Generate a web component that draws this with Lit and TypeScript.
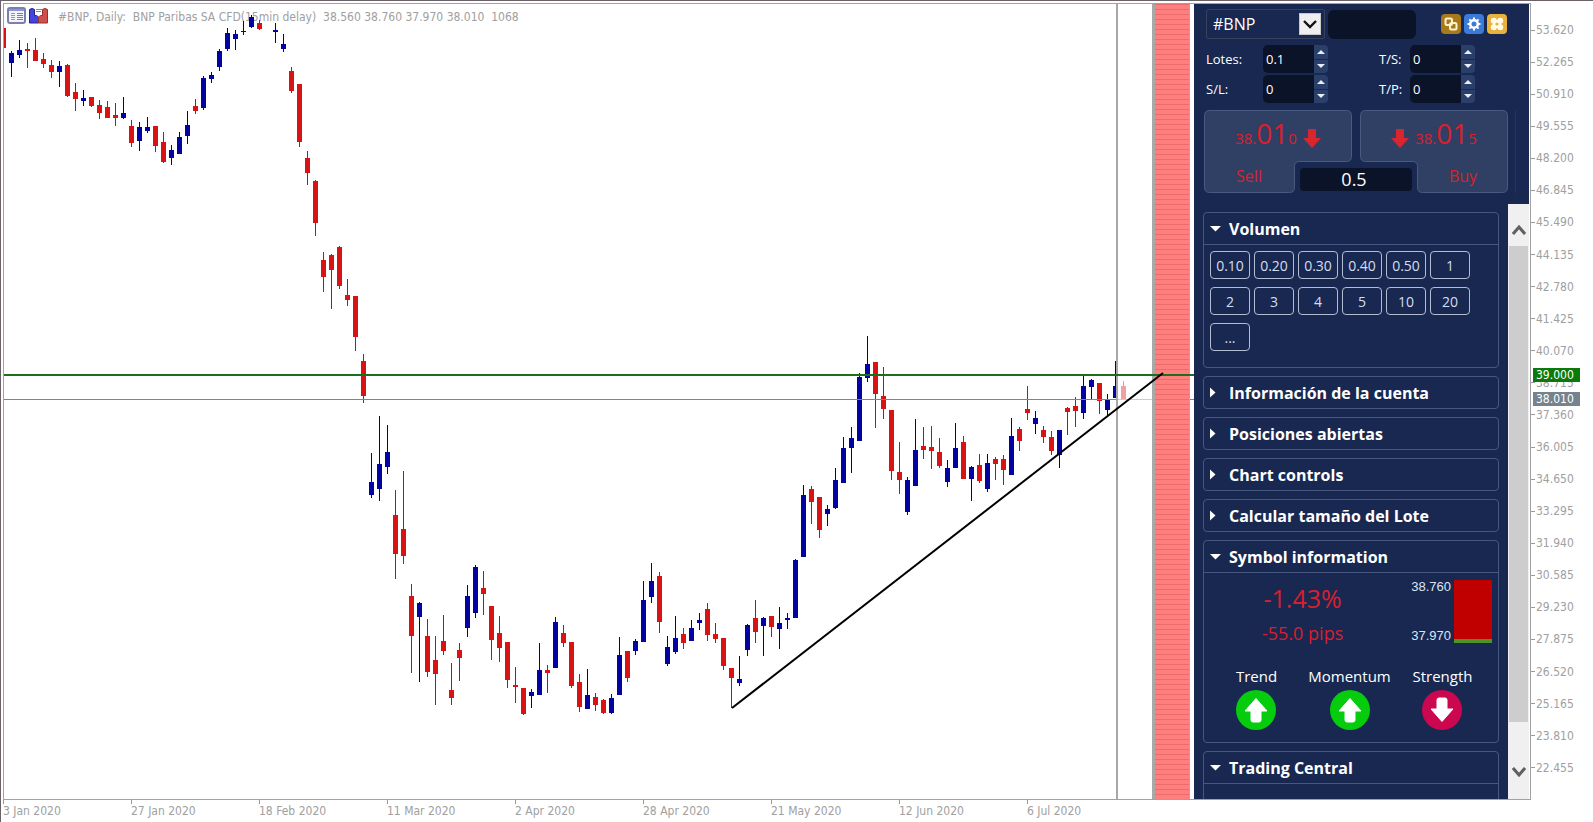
import { LitElement, html, svg, css } from "lit";
import { customElement, property, state } from "lit/decorators.js";

type Candle = [number, number, number, number, number, "u" | "d"];

// slot, high, body top, body bottom, low, direction
const CANDLES: Candle[] = [
  [-1, 28, 28, 48, 48, "d"],
  [0, 51, 53, 63, 77, "u"], [1, 40, 50, 55, 58, "u"], [2, 43, 49, 51, 68, "d"], [3, 38, 50, 61, 61, "d"],
  [4, 53, 59, 64, 68, "d"], [5, 60, 65, 72, 78, "d"], [6, 61, 66, 72, 87, "u"], [7, 64, 65, 96, 97, "d"],
  [8, 83, 92, 99, 111, "d"], [9, 90, 98, 101, 106, "u"], [10, 97, 97, 106, 107, "d"], [11, 100, 105, 113, 119, "d"],
  [12, 101, 107, 118, 118, "d"], [13, 103, 115, 118, 126, "d"], [14, 97, 113, 118, 119, "u"], [15, 120, 126, 143, 147, "d"],
  [16, 122, 127, 141, 151, "u"], [17, 117, 127, 131, 133, "u"], [18, 126, 126, 146, 152, "d"], [19, 132, 142, 162, 163, "d"],
  [20, 145, 150, 158, 165, "u"], [21, 132, 137, 154, 154, "u"], [22, 111, 125, 136, 144, "u"], [23, 99, 106, 111, 114, "d"],
  [24, 76, 78, 108, 110, "u"], [25, 72, 75, 79, 83, "u"], [26, 49, 51, 67, 71, "u"], [27, 28, 33, 49, 51, "u"],
  [28, 30, 34, 39, 50, "u"], [29, 21, 31, 32, 35, "u"], [30, 15, 17, 27, 28, "u"], [31, 20, 23, 29, 30, "d"],
  [33, 23, 30, 32, 43, "u"], [34, 34, 44, 49, 52, "u"], [35, 67, 71, 91, 93, "d"], [36, 84, 84, 142, 147, "d"],
  [37, 151, 158, 173, 185, "d"], [38, 180, 181, 223, 236, "d"], [39, 252, 260, 277, 292, "d"], [40, 254, 255, 270, 309, "d"],
  [41, 246, 247, 286, 289, "d"], [42, 279, 295, 300, 306, "d"], [43, 296, 296, 337, 351, "d"], [44, 354, 361, 396, 403, "d"],
  [45, 453, 482, 495, 498, "u"], [46, 416, 464, 489, 501, "u"], [47, 425, 452, 467, 474, "u"], [48, 490, 515, 554, 579, "d"],
  [49, 471, 529, 556, 564, "d"], [50, 584, 596, 636, 673, "d"], [51, 602, 603, 617, 682, "u"], [52, 619, 636, 672, 677, "d"],
  [53, 636, 660, 674, 705, "d"], [54, 615, 641, 651, 655, "d"], [55, 663, 690, 698, 705, "d"], [56, 643, 650, 658, 681, "d"],
  [57, 585, 596, 628, 637, "u"], [58, 565, 567, 613, 618, "u"], [59, 571, 588, 594, 615, "d"], [60, 606, 606, 640, 660, "d"],
  [61, 616, 633, 648, 662, "d"], [62, 642, 642, 680, 688, "d"], [63, 667, 685, 687, 703, "d"], [64, 688, 688, 714, 715, "d"],
  [65, 689, 692, 696, 708, "u"], [66, 643, 670, 695, 695, "u"], [67, 665, 670, 673, 693, "d"], [68, 617, 622, 668, 668, "u"],
  [69, 625, 633, 643, 647, "d"], [70, 642, 642, 686, 688, "d"], [71, 674, 682, 707, 712, "d"], [72, 669, 695, 709, 709, "u"],
  [73, 693, 697, 705, 711, "d"], [74, 699, 700, 713, 714, "d"], [75, 694, 698, 713, 714, "u"], [76, 637, 655, 695, 695, "u"],
  [77, 651, 651, 678, 682, "d"], [78, 639, 641, 651, 655, "u"], [79, 581, 600, 642, 642, "u"], [80, 563, 581, 597, 603, "u"],
  [81, 572, 576, 622, 633, "d"], [82, 636, 647, 664, 666, "u"], [83, 616, 638, 652, 654, "u"], [84, 628, 634, 643, 649, "d"],
  [85, 620, 628, 641, 641, "u"], [86, 613, 620, 623, 630, "u"], [87, 603, 609, 635, 641, "d"], [88, 623, 634, 639, 643, "d"],
  [89, 638, 638, 666, 670, "d"], [90, 668, 668, 678, 708, "d"], [91, 656, 679, 683, 686, "u"], [92, 624, 625, 650, 656, "u"],
  [93, 600, 618, 632, 643, "d"], [94, 617, 618, 626, 656, "u"], [95, 616, 616, 627, 637, "d"], [96, 607, 623, 629, 649, "u"],
  [97, 613, 618, 620, 629, "u"], [98, 559, 560, 618, 618, "u"], [99, 485, 495, 557, 557, "u"], [100, 486, 489, 502, 524, "d"],
  [101, 497, 497, 530, 538, "d"], [102, 505, 509, 514, 526, "u"], [103, 468, 480, 508, 509, "u"], [104, 437, 448, 483, 483, "u"],
  [105, 427, 438, 448, 473, "u"], [106, 373, 377, 441, 441, "u"], [107, 336, 364, 378, 382, "u"], [108, 362, 362, 394, 428, "d"],
  [109, 367, 396, 409, 419, "d"], [110, 410, 410, 471, 480, "d"], [111, 442, 472, 480, 494, "d"], [112, 477, 480, 512, 515, "u"],
  [113, 419, 450, 486, 486, "u"], [114, 427, 446, 450, 459, "d"], [115, 426, 447, 451, 469, "d"], [116, 438, 452, 466, 468, "d"],
  [117, 460, 468, 482, 487, "u"], [118, 423, 448, 468, 468, "u"], [119, 436, 442, 479, 479, "d"], [120, 466, 467, 479, 501, "u"],
  [121, 454, 465, 481, 483, "d"], [122, 454, 463, 489, 492, "u"], [123, 457, 459, 464, 480, "d"], [124, 455, 459, 470, 485, "d"],
  [125, 418, 436, 475, 475, "u"], [126, 427, 429, 441, 451, "d"], [127, 386, 409, 413, 420, "d"], [128, 411, 418, 424, 434, "u"],
  [129, 426, 430, 437, 443, "d"], [130, 431, 437, 451, 455, "d"], [131, 430, 430, 455, 468, "u"], [132, 407, 408, 412, 435, "d"],
  [133, 397, 406, 411, 427, "d"], [134, 376, 386, 413, 419, "u"], [135, 379, 380, 387, 400, "u"], [136, 383, 383, 401, 414, "d"],
  [137, 394, 399, 410, 416, "u"], [138, 361, 386, 398, 398, "u"], [139, 381, 386, 399, 400, "d"],
];

const PRICES = [
  "53.620", "52.265", "50.910", "49.555", "48.200", "46.845", "45.490", "44.135", "42.780", "41.425", "40.070", "38.715",
  "37.360", "36.005", "34.650", "33.295", "31.940", "30.585", "29.230", "27.875", "26.520", "25.165", "23.810", "22.455",
];

const DATES = [
  "3 Jan 2020", "27 Jan 2020", "18 Feb 2020", "11 Mar 2020", "2 Apr 2020", "28 Apr 2020", "21 May 2020", "12 Jun 2020", "6 Jul 2020",
];

@customElement("price-chart")
class PriceChart extends LitElement {
  static styles = css`
    :host { display: grid; min-width: 0; min-height: 0; overflow: hidden; font: 12px/16px "DejaVu Sans Condensed", "DejaVu Sans", sans-serif; }
    .legend, .plot { grid-area: 1 / 1; }
    .legend { display: flex; align-items: flex-start; gap: 3px; padding: 3px 0 0 3px; color: #a0a0a0; white-space: pre; }
    .legend svg { width: 19px; height: 17px; flex: none; }
    .caption { padding: 2px 0 0 7px; }
    .plot { display: block; width: 100%; height: 100%; z-index: 1; }
    .u { fill: #0303a2; }
    .d { fill: #d81313; }
    .wu { fill: #05055c; }
    .wd { fill: #a31c1c; }
    .level { fill: #1b701b; }
    .price { fill: #7d8686; }
    .shade { fill: #fff; fill-opacity: 0.6; }
    .edge { fill: #a8a8a8; }
    .base { fill: #ff7f7f; }
    .stripe { fill: #ea6d6d; }
    .trend { stroke: #000; stroke-width: 2; }
  `;

  render() {
    return html`
      <div class="legend">
        <svg viewBox="0 0 19 17" aria-hidden="true">
          <rect x="1" y="1" width="17" height="15" rx="2" fill="#f4f4fb" stroke="#7c7fae" stroke-width="2" />
          <rect x="2" y="2" width="15" height="2" fill="#8a94e0" />
          <path d="M4 6.5h4M4 8.500h4M4 10.500h4M4 12.500h4" stroke="#e07a6a" />
          <path d="M10 6.500h6M10 8.500h6M10 10.500h6M10 12.500h6" stroke="#6a7ad8" />
        </svg>
        <svg viewBox="0 0 19 17" aria-hidden="true">
          <path d="M7 2.500h6M7 4.500h5" stroke="#888" />
          <path d="M.5 2.500q2.500-2 5 0v6h2l2 1.500v6H.5z" fill="#4444dc" stroke="#22228c" />
          <path d="M18.500 2.500q-2.500-2-5 0v6h-2l-2 1.500v6h9z" fill="#cf4f4f" stroke="#963030" />
        </svg>
        <span class="caption">#BNP, Daily:  BNP Paribas SA CFD(15min delay)  38.560 38.760 37.970 38.010  1068</span>
      </div>
      <svg class="plot" viewBox="4 4 1190 795" preserveAspectRatio="none" role="img" aria-label="#BNP, Daily">
        <defs>
          <pattern id="bars" y="4" width="40" height="5" patternUnits="userSpaceOnUse">
            <rect class="base" width="40" height="5" />
            <rect class="stripe" width="40" height="1" />
          </pattern>
        </defs>
        <g shape-rendering="crispEdges">
          ${CANDLES.map(([k, hi, top, bottom, lo, dir]) => {
            const x = 11 + k * 8;
            return svg`
              <rect class=${"w" + dir} x=${x} y=${hi} width="1" height=${lo - hi}></rect>
              <rect class=${dir} x=${x - 2} y=${top} width="5" height=${bottom - top}></rect>`;
          })}
          <rect class="price" x="4" y="399" width="1190" height="1" />
          <rect class="shade" x="1118" y="4" width="34" height="795" />
          <rect class="edge" x="1116" y="4" width="2" height="795" />
          <rect class="edge" x="1152" y="4" width="38" height="795" />
          <rect x="1155" y="4" width="34" height="795" fill="url(#bars)" />
          <rect class="level" x="4" y="374" width="1190" height="2" />
        </g>
        <line class="trend" x1="732" y1="708" x2="1163" y2="373" />
      </svg>
    `;
  }
}

@customElement("number-field")
class NumberField extends LitElement {
  @property() label = "";
  @property() value = "0";
  static styles = css`
    :host { display: contents; }
    label { font-size: 13px; line-height: 28px; color: #fff; }
    .field { display: flex; height: 28px; }
    input { width: 51px; min-width: 0; box-sizing: border-box; border: 0; border-radius: 5px 0 0 5px; padding: 0 3px; background: #0b1328; color: #fff; font: 13px "Open Sans", sans-serif; appearance: textfield; -moz-appearance: textfield; }
    input::-webkit-inner-spin-button, input::-webkit-outer-spin-button { appearance: none; margin: 0; }
    .steps { display: grid; grid-template-rows: 1fr 1fr; gap: 1px; width: 14px; }
    button { border: 0; padding: 0; background: #2b3f6b; border-radius: 0 4px 0 0; display: grid; place-items: center; }
    button + button { border-radius: 0 0 4px 0; }
    svg { width: 8px; height: 4px; }
  `;
  private step(sign: number) {
    this.value = String(Math.round((Number(this.value) + sign * 0.1) * 100) / 100);
  }
  render() {
    return html`
      <label for="n">${this.label}</label>
      <div class="field">
        <input id="n" type="number" step="any" .value=${this.value} />
        <div class="steps">
          <button aria-label="+" @click=${() => this.step(1)}><svg viewBox="0 0 8 4"><path d="M0 4L4 0l4 4z" fill="#e8edf8" /></svg></button>
          <button aria-label="-" @click=${() => this.step(-1)}><svg viewBox="0 0 8 4"><path d="M0 0l4 4 4-4z" fill="#e8edf8" /></svg></button>
        </div>
      </div>
    `;
  }
}

@customElement("fold-section")
class FoldSection extends LitElement {
  @property() heading = "";
  @property({ type: Boolean, reflect: true }) open = false;
  static styles = css`
    :host { display: block; flex: none; box-sizing: border-box; border: 1px solid #465880; border-radius: 4px; }
    h2 { margin: 0; }
    .head { display: flex; align-items: center; gap: 8px; width: 100%; height: 31px; border: 0; padding: 0 6px; background: none; color: #fff; font: 700 16px "Open Sans", sans-serif; text-align: left; }
    .head svg { width: 11px; height: 11px; flex: none; }
    .body { border-top: 1px solid #465880; }
  `;
  render() {
    return html`
      <h2>
        <button class="head" aria-expanded=${this.open ? "true" : "false"} @click=${() => (this.open = !this.open)}>
          <svg viewBox="0 0 11 11"><path d=${this.open ? "M0 3h11L5.500 8.500z" : "M0 0.500v10l5.500-5z"} fill="#fff" /></svg>
          <span>${this.heading}</span>
        </button>
      </h2>
      ${this.open ? html`<div class="body"><slot></slot></div>` : ""}
    `;
  }
}

@customElement("trade-panel")
class TradePanel extends LitElement {
  @state() private volume = "0.5";
  static styles = css`
    :host { display: flex; flex-direction: column; min-height: 0; overflow: hidden; background: #182851; color: #fff; font: 13px "Open Sans", sans-serif; }
    button { font-family: inherit; cursor: pointer; }
    .ticket { flex: none; display: flex; flex-direction: column; padding: 5px 0 11px 12px; }
    .top { display: flex; align-items: center; gap: 3px; height: 30px; margin-bottom: 6px; }
    .pick { position: relative; width: 119px; height: 30px; }
    .pick select { width: 100%; height: 100%; box-sizing: border-box; appearance: none; border: 1px solid #36415c; background: transparent; color: #fff; font: 16px "Open Sans", sans-serif; padding: 0 6px; border-radius: 2px; }
    .pick svg { position: absolute; right: 4px; top: 4px; width: 22px; height: 22px; pointer-events: none; }
    .search { width: 88px; height: 29px; box-sizing: border-box; border: 0; border-radius: 6px; background: #0b1328; color: #fff; margin-right: 22px; }
    .tool { width: 20px; height: 20px; border: 0; padding: 0; border-radius: 4px; display: grid; place-items: center; }
    .tool svg { width: 16px; height: 16px; }
    .link { background: #a87a1a; }
    .gear { background: #3a7ad8; }
    .grid { background: #e8b23c; }
    .fields { display: grid; grid-template-columns: 57px 65px 51px 31px 65px; row-gap: 2px; margin-bottom: 7px; }
    .gap { grid-column: 3; }
    .deal { position: relative; display: flex; gap: 8px; width: 311px; margin-left: -2px; border-right: 1px solid #22345f; }
    .side { position: relative; display: flex; flex-direction: column; width: 148px; height: 83px; border: 0; padding: 0; background: none; color: #d9202c; }
    .side .shape { position: absolute; inset: 0; width: 148px; height: 83px; }
    .quote { position: relative; height: 52px; width: 100%; display: flex; align-items: baseline; justify-content: center; font-size: 15px; line-height: 46px; }
    .quote b { font-weight: 400; font-size: 28px; }
    .arrow { width: 18px; height: 20px; align-self: center; margin: 3px 0 0 6px; }
    .buy .arrow { margin: 3px 6px 0 0; }
    .name { position: relative; width: 90px; font-size: 16px; line-height: 28px; text-align: center; }
    .buy .name { align-self: flex-end; }
    .lots { position: absolute; left: 96px; top: 58px; width: 112px; height: 23px; box-sizing: border-box; border: 0; border-radius: 4px; background: #0b1328; color: #fff; font: 18px/22px "Open Sans", sans-serif; text-align: center; padding: 0 4px 2px 0; }
    .lower { flex: 1; min-height: 0; display: grid; grid-template-columns: 1fr 21px; }
    .stack { min-height: 0; overflow: hidden; display: flex; flex-direction: column; gap: 8px; padding: 8px 9px 0 9px; }
    .bar { display: flex; flex-direction: column; background: #f0f0f0; }
    .bar button { border: 0; background: none; padding: 0; display: grid; place-items: center; flex: none; }
    .bar svg { width: 14px; height: 12px; }
    .bar .up { height: 42px; padding-top: 10px; }
    .thumb { flex: 475; margin: 0 1px; background: #cdcdcd; }
    .rest { flex: 23; }
    .bar .down { height: 54px; }
    .chips { display: grid; grid-template-columns: repeat(6, 40px); gap: 8px 4px; padding: 6px 6px 16px; }
    .chip { height: 28px; box-sizing: border-box; border: 1px solid #b4bed2; border-radius: 4px; background: none; color: #d5deee; font-size: 14px; padding: 0; }
    .info { display: grid; grid-template-columns: 1fr auto auto; padding: 7px 6px 0 0; }
    .change { display: flex; flex-direction: column; align-items: center; padding-right: 10px; color: #d81f30; }
    .pct { font-size: 25px; line-height: 36px; }
    .pips { font-size: 18px; line-height: 34px; }
    .range { display: flex; flex-direction: column; justify-content: space-between; height: 63px; margin-right: 3px; font: 13px/14px "Liberation Sans", sans-serif; color: #dde5f4; }
    .day { width: 38px; height: 63px; background: #c00000; border-bottom: 4px solid #4c9428; box-sizing: border-box; }
    .signals { display: grid; grid-template-columns: repeat(3, 1fr); justify-items: center; padding: 12px 9px 12px 6px; font-size: 15px; line-height: 28px; }
    .signal { display: flex; flex-direction: column; align-items: center; }
    .signal svg { width: 40px; height: 40px; }
    .blank { height: 120px; }
  `;

  private arrow() {
    return html`<svg class="arrow" viewBox="0 0 18 20" aria-hidden="true"><path d="M5 1h8v9h5l-9 10-9-10h5z" fill="#d9262e" /></svg>`;
  }

  private signal(name: string, up: boolean) {
    return html`
      <div class="signal">
        <span>${name}</span>
        <svg viewBox="0 0 40 40" role="img" aria-label=${up ? "Up" : "Down"}>
          <circle cx="20" cy="20" r="20" fill=${up ? "#05cc0c" : "#cb0750"} />
          <path d="M20 8.500L31 21h-6v9q0 2-2 2h-6q-2 0-2-2v-9H9z" transform=${up ? "" : "rotate(180 20 20)"} fill="#fff" stroke="#fff" stroke-width="1" stroke-linejoin="round" />
        </svg>
      </div>
    `;
  }

  render() {
    return html`
      <div class="ticket">
        <div class="top">
          <div class="pick">
            <select aria-label="Symbol"><option>#BNP</option></select>
            <svg viewBox="0 0 22 22" aria-hidden="true">
              <rect x="0.500" y="0.500" width="21" height="21" fill="#efefef" stroke="#c8c8c8" />
              <path d="M5 8l6 6 6-6" fill="none" stroke="#111" stroke-width="2.400" />
            </svg>
          </div>
          <input class="search" aria-label="Search" />
          <button class="tool link" aria-label="Link">
            <svg viewBox="0 0 16 16" fill="none" stroke="#fff3cf" stroke-width="2"><rect x="2.500" y="2.500" width="6.500" height="6.500" rx="1.500" /><rect x="7" y="7" width="6.500" height="6.500" rx="1.500" /></svg>
          </button>
          <button class="tool gear" aria-label="Settings">
            <svg viewBox="0 0 16 16" fill="none" stroke="#fff"><circle cx="8" cy="8" r="3.800" stroke-width="2.600" /><path d="M8 1.500v2M8 12.500v2M1.500 8h2M12.500 8h2M3.400 3.400l1.400 1.400M11.200 11.200l1.400 1.400M12.600 3.400l-1.400 1.400M4.800 11.200l-1.400 1.400" stroke-width="2" /></svg>
          </button>
          <button class="tool grid" aria-label="Layout">
            <svg viewBox="0 0 16 16" fill="#fffbe6"><circle cx="4.800" cy="4.800" r="3" /><circle cx="11.200" cy="4.800" r="3" /><circle cx="4.800" cy="11.200" r="3" /><circle cx="11.200" cy="11.200" r="3" /><rect x="4" y="6.500" width="8" height="3" /><rect x="6.500" y="4" width="3" height="8" /><circle cx="8" cy="8" r="1.600" fill="#e8b23c" /></svg>
          </button>
        </div>
        <div class="fields">
          <number-field label="Lotes:" value="0.1"></number-field>
          <span class="gap"></span>
          <number-field label="T/S:"></number-field>
          <number-field label="S/L:"></number-field>
          <span class="gap"></span>
          <number-field label="T/P:"></number-field>
        </div>
        <div class="deal">
          <button class="side">
            <svg class="shape" viewBox="0 0 148 83" aria-hidden="true">
              <path d="M5.500.5h137q5 0 5 5v41q0 5-5 5h-47q-5 0-5 5v21q0 5-5 5h-80q-5 0-5-5v-72q0-5 5-5z" fill="#304064" stroke="#495a80" />
            </svg>
            <span class="quote">38.<b>01</b>0${this.arrow()}</span>
            <span class="name">Sell</span>
          </button>
          <button class="side buy">
            <svg class="shape" viewBox="0 0 148 83" aria-hidden="true">
              <path d="M142.500.5h-137q-5 0-5 5v41q0 5 5 5h47q5 0 5 5v21q0 5 5 5h80q5 0 5-5v-72q0-5-5-5z" fill="#304064" stroke="#495a80" />
            </svg>
            <span class="quote">${this.arrow()}38.<b>01</b>5</span>
            <span class="name">Buy</span>
          </button>
          <input class="lots" aria-label="Volumen" .value=${this.volume} />
        </div>
      </div>
      <div class="lower">
        <div class="stack">
          <fold-section heading="Volumen" open>
            <div class="chips">
              ${["0.10", "0.20", "0.30", "0.40", "0.50", "1", "2", "3", "4", "5", "10", "20", "..."].map(
                (v) => html`<button class="chip" @click=${() => { if (v !== "...") this.volume = v; }}>${v}</button>`,
              )}
            </div>
          </fold-section>
          <fold-section heading="Información de la cuenta"></fold-section>
          <fold-section heading="Posiciones abiertas"></fold-section>
          <fold-section heading="Chart controls"></fold-section>
          <fold-section heading="Calcular tamaño del Lote"></fold-section>
          <fold-section heading="Symbol information" open>
            <div class="info">
              <div class="change"><span class="pct">-1.43%</span><span class="pips">-55.0 pips</span></div>
              <div class="range"><span>38.760</span><span>37.970</span></div>
              <div class="day"></div>
            </div>
            <div class="signals">
              ${this.signal("Trend", true)} ${this.signal("Momentum", true)} ${this.signal("Strength", false)}
            </div>
          </fold-section>
          <fold-section heading="Trading Central" open><div class="blank"></div></fold-section>
        </div>
        <div class="bar">
          <button class="up" aria-label="Scroll up"><svg viewBox="0 0 14 12"><path d="M1 10l6-7 6 7" fill="none" stroke="#606060" stroke-width="3" /></svg></button>
          <div class="thumb"></div>
          <div class="rest"></div>
          <button class="down" aria-label="Scroll down"><svg viewBox="0 0 14 12"><path d="M1 2l6 7 6-7" fill="none" stroke="#606060" stroke-width="3" /></svg></button>
        </div>
      </div>
    `;
  }
}

@customElement("app-root")
class AppRoot extends LitElement {
  static styles = css`
    :host { display: grid; grid-template: minmax(0, 1fr) 22px / minmax(0, 1fr) 62px; height: 100vh; box-sizing: border-box; border: solid #6b6269; border-width: 1px 0 0 1px; padding: 2px 0 0 2px; overflow: hidden; background: #fff; color: #a0a0a0; font: 12px/14px "DejaVu Sans Condensed", "DejaVu Sans", sans-serif; }
    .frame { display: grid; grid-template-columns: minmax(0, 1fr) 335px; padding-right: 1px; border: 1px solid #a3a0a3; min-height: 0; }
    .prices { position: relative; display: flex; flex-direction: column; justify-content: space-between; padding: 20px 0 25px; }
    .tick { display: flex; align-items: center; gap: 1px; }
    .tick::before { content: ""; width: 4px; height: 1px; background: #999; }
    .tag { position: absolute; left: 2px; width: 47px; height: 14px; box-sizing: border-box; padding-left: 3px; color: #fff; }
    .level { top: 365px; background: #0b7a0b; }
    .last { top: 389px; background: #75838f; }
    .dates { display: flex; }
    .date { flex: 0 0 128px; white-space: nowrap; }
    .date::before { content: ""; display: block; width: 1px; height: 4px; background: #999; }
  `;
  render() {
    return html`
      <main class="frame">
        <price-chart></price-chart>
        <trade-panel></trade-panel>
      </main>
      <div class="prices">
        ${PRICES.map((p) => html`<span class="tick">${p}</span>`)}
        <span class="tag level">39.000</span>
        <span class="tag last">38.010</span>
      </div>
      <div class="dates">${DATES.map((d) => html`<span class="date">${d}</span>`)}</div>
    `;
  }
}
